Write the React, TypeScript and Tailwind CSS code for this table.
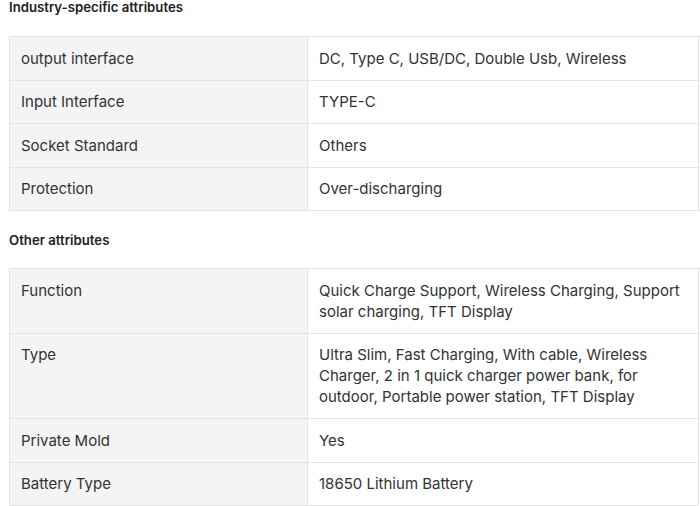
import React from "react";

type Row = { label: string; value: string };

const industry: Row[] = [
  { label: "output interface", value: "DC, Type C, USB/DC, Double Usb, Wireless" },
  { label: "Input Interface", value: "TYPE-C" },
  { label: "Socket Standard", value: "Others" },
  { label: "Protection", value: "Over-discharging" },
];

const other: Row[] = [
  {
    label: "Function",
    value: "Quick Charge Support, Wireless Charging, Support solar charging, TFT Display",
  },
  {
    label: "Type",
    value:
      "Ultra Slim, Fast Charging, With cable, Wireless Charger, 2 in 1 quick charger power bank, for outdoor, Portable power station, TFT Display",
  },
  { label: "Private Mold", value: "Yes" },
  { label: "Battery Type", value: "18650 Lithium Battery" },
];

function AttrTable({ rows }: { rows: Row[] }) {
  return (
    <div className="grid grid-cols-[298px_391px] border-l border-t border-[#e3e3e3] text-[15px] leading-[21px] text-[#333]">
      {rows.map((r) => (
        <React.Fragment key={r.label}>
          <div className="bg-[#f4f4f4] border-r border-b border-[#e3e3e3] px-[11px] py-[10.75px]">
            {r.label}
          </div>
          <div className="bg-white border-r border-b border-[#e3e3e3] px-[11px] py-[10.75px]">
            {r.value}
          </div>
        </React.Fragment>
      ))}
    </div>
  );
}

export default function App() {
  return (
    <div
      className="w-[700px] h-[506px] overflow-hidden bg-white pl-[9px]"
      style={{ fontFamily: "Inter, 'Noto Sans', sans-serif" }}
    >
      <div className="mt-[-3px]">
        <h3 className="text-[13.2px] leading-[20px] font-semibold text-[#222] mb-[19px]">
          Industry-specific attributes
        </h3>
        <AttrTable rows={industry} />
        <h3 className="text-[13.2px] leading-[20px] font-semibold text-[#222] mt-[19px] mb-[18px]">
          Other attributes
        </h3>
        <AttrTable rows={other} />
      </div>
    </div>
  );
}
